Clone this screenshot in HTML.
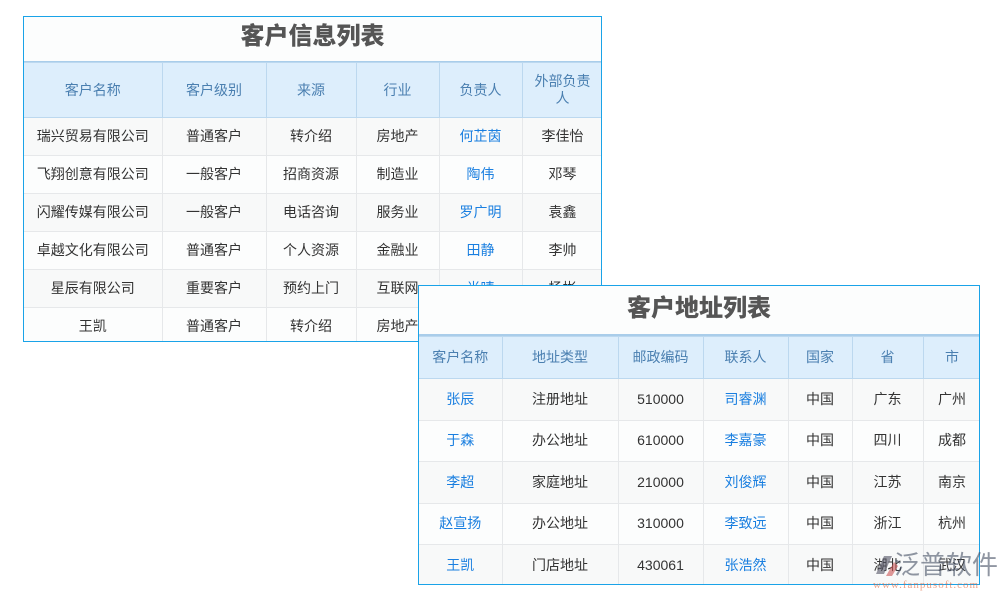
<!DOCTYPE html>
<html><head><meta charset="utf-8"><style>
body{margin:0;width:1000px;height:600px;background:#fff;position:relative;overflow:hidden;font-family:"Liberation Sans","Noto Sans CJK SC",sans-serif;}
.t{position:absolute;border:1px solid #1aa3e8;background:#fcfdfd;box-sizing:border-box;overflow:hidden}
.title{text-align:center;font-weight:900;color:#555;font-size:24px;border-bottom:1px solid #a9cdea;box-sizing:border-box}
table{border-collapse:collapse;table-layout:fixed;font-size:14px;color:#333}
td{text-align:center;border:1px solid #e6e8ea;padding:0;line-height:17px}
tr.h td{background:#ddeefc;color:#4a7fb0;border-color:#bcd8ef}
tr:nth-child(even) td{background:#f8f9f9}
tr.h td{background:#ddeefc}
.b{color:#1a7fe0}
td:first-child{border-left:none}
</style></head><body>
<div class="t" style="left:23px;top:16px;width:579px;height:326px">
<div class="title" style="height:45px;line-height:40px">客户信息列表</div>
<table style="width:579px">
<colgroup><col style="width:138px"><col style="width:104px"><col style="width:90px"><col style="width:83px"><col style="width:83px"><col style="width:81px"></colgroup>
<tr class="h" style="height:55px"><td>客户名称</td><td>客户级别</td><td>来源</td><td>行业</td><td>负责人</td><td>外部负责<br>人</td></tr>
<tr style="height:38px"><td>瑞兴贸易有限公司</td><td>普通客户</td><td>转介绍</td><td>房地产</td><td class="b">何芷茵</td><td>李佳怡</td></tr>
<tr style="height:38px"><td>飞翔创意有限公司</td><td>一般客户</td><td>招商资源</td><td>制造业</td><td class="b">陶伟</td><td>邓琴</td></tr>
<tr style="height:38px"><td>闪耀传媒有限公司</td><td>一般客户</td><td>电话咨询</td><td>服务业</td><td class="b">罗广明</td><td>袁鑫</td></tr>
<tr style="height:38px"><td>卓越文化有限公司</td><td>普通客户</td><td>个人资源</td><td>金融业</td><td class="b">田静</td><td>李帅</td></tr>
<tr style="height:38px"><td>星辰有限公司</td><td>重要客户</td><td>预约上门</td><td>互联网</td><td class="b">肖晴</td><td>杨彬</td></tr>
<tr style="height:38px"><td>王凯</td><td>普通客户</td><td>转介绍</td><td>房地产</td><td class="b">王凯</td><td>王凯</td></tr>
</table></div>

<div class="t" style="left:418px;top:285px;width:562px;height:300px">
<div class="title" style="height:50px;line-height:46px;border-bottom:2px solid #a9cdea">客户地址列表</div>
<table style="width:562px">
<colgroup><col style="width:83px"><col style="width:116px"><col style="width:85px"><col style="width:85px"><col style="width:64px"><col style="width:71px"><col style="width:58px"></colgroup>
<tr class="h" style="height:42px"><td>客户名称</td><td>地址类型</td><td>邮政编码</td><td>联系人</td><td>国家</td><td>省</td><td>市</td></tr>
<tr style="height:41.5px"><td class="b">张辰</td><td>注册地址</td><td>510000</td><td class="b">司睿渊</td><td>中国</td><td>广东</td><td>广州</td></tr>
<tr style="height:41.5px"><td class="b">于森</td><td>办公地址</td><td>610000</td><td class="b">李嘉豪</td><td>中国</td><td>四川</td><td>成都</td></tr>
<tr style="height:41.5px"><td class="b">李超</td><td>家庭地址</td><td>210000</td><td class="b">刘俊辉</td><td>中国</td><td>江苏</td><td>南京</td></tr>
<tr style="height:41.5px"><td class="b">赵宣扬</td><td>办公地址</td><td>310000</td><td class="b">李致远</td><td>中国</td><td>浙江</td><td>杭州</td></tr>
<tr style="height:41.5px"><td class="b">王凯</td><td>门店地址</td><td>430061</td><td class="b">张浩然</td><td>中国</td><td>湖北</td><td>武汉</td></tr>
</table></div>

<div style="position:absolute;left:872px;top:552px;width:28px;height:28px;opacity:.6">
<svg width="28" height="28"><path d="M4 22 L12 4 L20 4 L12 22Z" fill="#556"/><path d="M14 24 L22 10 L26 14 L20 24Z" fill="#c55"/></svg></div>
<div style="position:absolute;left:894px;top:549px;font-size:26px;color:rgba(70,80,100,.6);font-family:'Noto Sans CJK SC',sans-serif;line-height:30px">泛普软件</div>
<div style="position:absolute;left:873px;top:579px;font-size:11px;color:rgba(220,100,60,.6);font-family:'Liberation Serif',serif;letter-spacing:1px">www.fanpusoft.com</div>
</body></html>
